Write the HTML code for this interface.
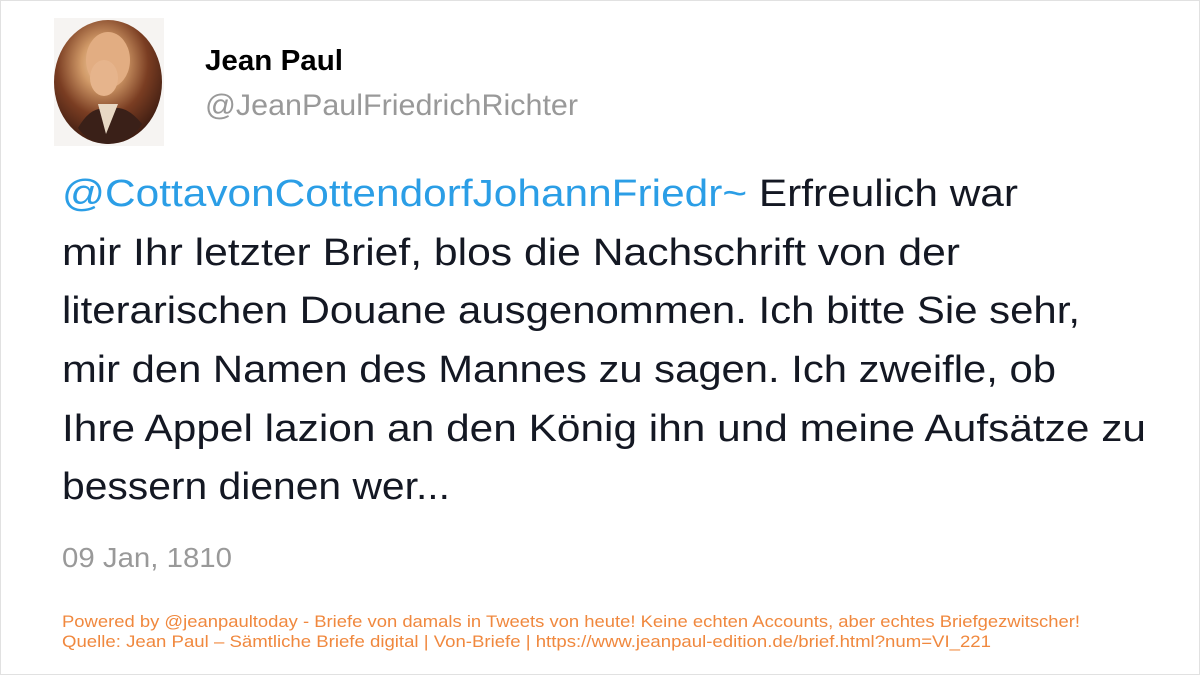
<!DOCTYPE html>
<html><head><meta charset="utf-8"><style>
html,body{margin:0;padding:0;background:#fff;}
svg{display:block;}
text{font-family:"Liberation Sans",sans-serif;}
</style></head><body>
<svg width="1200" height="675" viewBox="0 0 1200 675" xmlns="http://www.w3.org/2000/svg">
<rect x="0.5" y="0.5" width="1199" height="674" fill="#fff" stroke="#e1e1e1"/>
<defs>
<radialGradient id="face" cx="0.45" cy="0.35" r="0.65">
<stop offset="0" stop-color="#f4d2aa"/><stop offset="0.3" stop-color="#d19a68"/><stop offset="0.65" stop-color="#7a3d22"/><stop offset="1" stop-color="#3f1d12"/>
</radialGradient>
</defs>
<rect x="54" y="18" width="110" height="128" fill="#f6f4f2"/>
<ellipse cx="108" cy="82" rx="54" ry="62" fill="url(#face)"/>
<path d="M78 128 Q92 104 108 110 Q124 102 142 124 Q132 142 108 144 Q88 143 78 128Z" fill="#3a2018"/>
<path d="M98 104 L106 134 L118 104Z" fill="#e8d8c4"/>
<ellipse cx="108" cy="60" rx="22" ry="28" fill="#e2ad82"/>
<ellipse cx="104" cy="78" rx="14" ry="18" fill="#e6b48c"/>
<text x="205" y="70" font-size="29" font-weight="bold" fill="#000" textLength="138" lengthAdjust="spacingAndGlyphs">Jean Paul</text>
<text x="205" y="115" font-size="30" fill="#999" textLength="373" lengthAdjust="spacingAndGlyphs">@JeanPaulFriedrichRichter</text>
<g font-size="38" fill="#141823">
<text x="62" y="206" textLength="956" lengthAdjust="spacingAndGlyphs"><tspan fill="#2b9ee6">@CottavonCottendorfJohannFriedr~</tspan> Erfreulich war</text>
<text x="62" y="265" textLength="898" lengthAdjust="spacingAndGlyphs">mir Ihr letzter Brief, blos die Nachschrift von der</text>
<text x="62" y="323" textLength="1018" lengthAdjust="spacingAndGlyphs">literarischen Douane ausgenommen. Ich bitte Sie sehr,</text>
<text x="62" y="382" textLength="994" lengthAdjust="spacingAndGlyphs">mir den Namen des Mannes zu sagen. Ich zweifle, ob</text>
<text x="62" y="441" textLength="1084" lengthAdjust="spacingAndGlyphs">Ihre Appel lazion an den König ihn und meine Aufsätze zu</text>
<text x="62" y="499" textLength="388" lengthAdjust="spacingAndGlyphs">bessern dienen wer...</text>
</g>
<text x="62" y="567" font-size="28" fill="#999" textLength="170" lengthAdjust="spacingAndGlyphs">09 Jan, 1810</text>
<g font-size="16.5" fill="#f0883e">
<text x="62" y="627" textLength="1018" lengthAdjust="spacingAndGlyphs">Powered by @jeanpaultoday - Briefe von damals in Tweets von heute! Keine echten Accounts, aber echtes Briefgezwitscher!</text>
<text x="62" y="647" textLength="929" lengthAdjust="spacingAndGlyphs">Quelle: Jean Paul – Sämtliche Briefe digital | Von-Briefe | https://www.jeanpaul-edition.de/brief.html?num=VI_221</text>
</g>
</svg>
</body></html>
